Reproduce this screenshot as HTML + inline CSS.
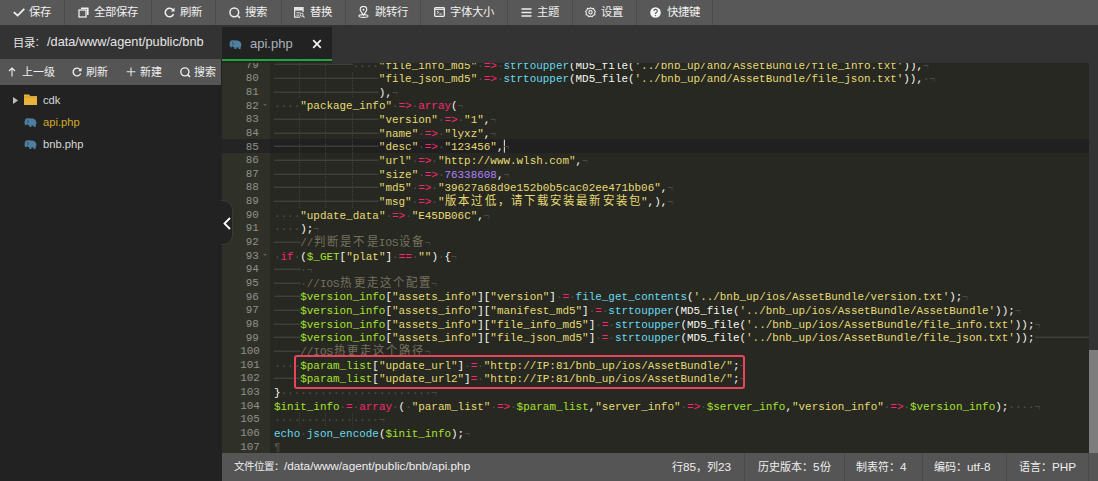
<!DOCTYPE html>
<html lang="zh-CN"><head><meta charset="utf-8">
<style>
*{margin:0;padding:0;box-sizing:border-box}
html,body{width:1098px;height:481px;overflow:hidden;background:#222;font-family:"Liberation Sans",sans-serif;}
.abs{position:absolute}
#tb{left:0;top:0;width:1098px;height:25px;background:#585858;}
.btn{position:absolute;top:0;height:25px;border-right:1px solid #4c4c4c;color:#f0f0f0;font-size:11.4px;}
.btn span{position:absolute;top:3px;white-space:nowrap;margin-left:1px}
.btn svg{position:absolute;top:6px}
#hdr{left:0;top:25px;width:222px;height:34px;background:#333;color:#e6e6e6;font-size:12.6px;}
#hdr span{position:absolute;left:13px;top:9px;white-space:nowrap}
#stb{left:0;top:59px;width:221px;height:26px;background:#555;color:#eee;font-size:11px;}
#stb span{position:absolute;top:3.8px;white-space:nowrap;margin-left:0.5px}
#stb svg{position:absolute}
#tree{left:0;top:85px;width:221px;height:396px;background:#222;}
.ti{position:absolute;left:43px;font-size:11.2px;color:#d8d8d8;white-space:nowrap}
#tabbar{left:222px;top:25px;width:876px;height:38px;background:#333;}
#tab{left:222px;top:27px;width:110px;height:34px;background:#222;border-bottom:2px solid #20a53a;}
#ed{left:222px;top:63px;width:876px;height:390px;background:#272822;overflow:hidden}
#gut{left:0;top:0;width:48px;height:390px;background:#2f3129;}
.gl{position:absolute;left:0;width:48px;height:13.64px;line-height:13.64px;font-family:"Liberation Mono",monospace;font-size:11.5px;color:#8f908a;}
.gl span{position:absolute;right:10.6px;top:0.2px;font-size:11.6px;transform:scaleX(0.94167);transform-origin:100% 0}
.gl.act{background:#242424}
.fold{position:absolute;right:3px;top:5.3px;width:0;height:0;border-left:2.3px solid transparent;border-right:2.3px solid transparent;border-top:2.8px solid #5e5e58}
#code{left:52px;top:0;width:816px;height:392px;}
.cl{position:absolute;left:0;height:13.64px;line-height:13.64px;white-space:pre;font-family:"Liberation Mono",monospace;font-size:11.5px;color:#f8f8f2;transform:scaleX(0.94986) translateY(0.7px);transform-origin:0 0}
.ig{position:absolute;width:1px;height:13.64px;background:repeating-linear-gradient(rgba(40,40,33,.3) 0 1px,#3f403a 1px 2px)}
#actl{left:48px;width:819px;height:13.64px;background:#202020}
.s{color:#e6db74}.k{color:#f92672}.v{color:#a6e22e}.f{color:#66d9ef}.n{color:#ae81ff}.c{color:#75715e}.t{color:#f8f8f2}.i{color:#52524d}
.eol{color:#4a4a45;font-size:10px}
b.w{display:inline-block;width:13.800px;text-align:center;font-weight:normal;font-family:"Liberation Sans",sans-serif;font-size:12px;line-height:13px;vertical-align:top}
b.tb{display:inline-block;height:13.64px;vertical-align:top;background:linear-gradient(#4a4a44,#4a4a44) 0 5.9px/100% 1px no-repeat}
b.cur{display:inline-block;width:1px;height:13px;background:#f8f8f0;vertical-align:top;margin-right:-1px}
#sb{left:867px;top:0;width:9px;height:390px;background:#333}
#thumb{left:867px;top:287px;width:9px;height:103px;background:#7d7d7d}
#st{left:222px;top:453px;width:876px;height:28px;background:#555;color:#eee;font-size:12px}
#st span{position:absolute;top:4.5px;white-space:nowrap;font-size:11.75px}
.z{font-style:normal;font-size:11px}
.sep{position:absolute;top:0;width:1px;height:28px;background:#4a4a4a}
#handle{left:221px;top:200px;width:12px;height:45px;background:#222;border:1px solid #3a3a3a;border-left:none;border-radius:0 10px 10px 0}
#redbox{left:294px;top:355px;width:451px;height:34px;border:2px solid #e8455c;border-radius:3px}
</style></head><body>
<div id="tb" class="abs">
 <div class="btn" style="left:0;width:65px"><svg style="left:13px;top:8px" width="12" height="9" viewBox="0 0 12 9"><path d="M0.8 4.2 L4.6 7.6 L11.3 0.8" fill="none" stroke="#f2f2f2" stroke-width="1.8"/></svg><span style="left:28px">保存</span></div>
 <div class="btn" style="left:65px;width:87px"><svg style="left:13px;top:7px" width="11" height="11" viewBox="0 0 11 11"><rect x="1" y="3" width="7" height="7" fill="none" stroke="#eee" stroke-width="1.3"/><path d="M3 1.2 H9.8 V8" fill="none" stroke="#eee" stroke-width="1.6"/></svg><span style="left:28px">全部保存</span></div>
 <div class="btn" style="left:151px;width:65px"><svg style="left:13px;top:7px" width="11" height="11" viewBox="0 0 11 11"><path d="M9.2 3.2 A4.3 4.3 0 1 0 9.6 7" fill="none" stroke="#eee" stroke-width="1.5"/><path d="M10.5 0.8 L10.5 4.6 L6.8 4.6 Z" fill="#eee"/></svg><span style="left:28px">刷新</span></div>
 <div class="btn" style="left:216px;width:66px"><svg style="left:13px;top:7px" width="12" height="12" viewBox="0 0 12 12"><circle cx="5.3" cy="5.3" r="4.4" fill="none" stroke="#eee" stroke-width="1.5"/><path d="M8.3 8.3 L11 11" stroke="#eee" stroke-width="1.6"/></svg><span style="left:28px">搜索</span></div>
 <div class="btn" style="left:281px;width:65px"><svg style="left:13px;top:7px" width="11" height="11" viewBox="0 0 11 11"><path d="M9.1 5.2 V0.6 H0.6 V10.2 H6.2" fill="none" stroke="#e4e4e4" stroke-width="1.2"/><path d="M0.6 2.3 H9.1" stroke="#e4e4e4" stroke-width="2.6"/><path d="M2.4 5.8 H6.4 M2.4 8.1 H5.2" stroke="#e4e4e4" stroke-width="1"/><circle cx="7.7" cy="7.7" r="1.5" fill="none" stroke="#e4e4e4" stroke-width="1"/><path d="M8.8 8.8 L10.5 10.5" stroke="#e4e4e4" stroke-width="1.1"/></svg><span style="left:28px">替换</span></div>
 <div class="btn" style="left:345px;width:76px"><svg style="left:13px;top:6px" width="11" height="12" viewBox="0 0 11 12"><path d="M5.5 9 C3 6 2.2 4.8 2.2 3.6 A3.3 3.3 0 0 1 8.8 3.6 C8.8 4.8 8 6 5.5 9 Z" fill="none" stroke="#eee" stroke-width="1.2"/><circle cx="5.5" cy="3.7" r="1" fill="#eee"/><ellipse cx="5.5" cy="10" rx="4.6" ry="1.4" fill="none" stroke="#eee" stroke-width="1.1"/></svg><span style="left:29px">跳转行</span></div>
 <div class="btn" style="left:421px;width:87px"><svg style="left:13px;top:7px" width="11" height="10" viewBox="0 0 11 10"><rect x="0.7" y="0.7" width="9.6" height="8.6" rx="0.8" fill="none" stroke="#eee" stroke-width="1.3"/><path d="M0.7 2.3 H10.3" stroke="#eee" stroke-width="1.2"/><path d="M3 4 L4.7 5.3 L3 6.6 M5.3 7 H7.8" fill="none" stroke="#eee" stroke-width="0.9"/></svg><span style="left:28px">字体大小</span></div>
 <div class="btn" style="left:508px;width:65px"><svg style="left:13px;top:8px" width="11" height="9" viewBox="0 0 11 9"><path d="M0.5 1 H10.5 M0.5 4.5 H10.5 M0.5 8 H10.5" stroke="#eee" stroke-width="1.5"/></svg><span style="left:28px">主题</span></div>
 <div class="btn" style="left:572px;width:65px"><svg style="left:13px;top:7px" width="11" height="11" viewBox="0 0 11 11"><path d="M5.5 0.6 L6.8 1.8 L8.6 1.4 L9.1 3.2 L10.4 4.4 L9.6 6 L10 7.8 L8.2 8.3 L7.1 9.8 L5.5 9 L3.9 9.8 L2.8 8.3 L1 7.8 L1.4 6 L0.6 4.4 L1.9 3.2 L2.4 1.4 L4.2 1.8 Z" fill="none" stroke="#eee" stroke-width="1.1" stroke-linejoin="round"/><circle cx="5.5" cy="5.3" r="1.7" fill="none" stroke="#eee" stroke-width="1.1"/></svg><span style="left:28px">设置</span></div>
 <div class="btn" style="left:636px;width:77px"><svg style="left:14px;top:7px" width="11" height="11" viewBox="0 0 11 11"><circle cx="5.5" cy="5.5" r="5.3" fill="#f4f4f4"/><path d="M3.9 4.1 A1.7 1.7 0 1 1 6.3 5.6 C5.6 6 5.5 6.3 5.5 7.1" fill="none" stroke="#585858" stroke-width="1.1"/><circle cx="5.5" cy="8.6" r="0.7" fill="#585858"/></svg><span style="left:30px">快捷键</span></div>
</div>
<div id="hdr" class="abs"><span style="font-size:11.3px;top:9px">目录</span><span style="left:35.5px;top:8.5px;font-size:12.76px">:</span><span style="left:47px;font-size:12.76px;top:8.5px">/data/www/agent/public/bnb</span></div>
<div id="stb" class="abs">
 <svg style="left:8px;top:8px" width="8" height="10" viewBox="0 0 8 10"><path d="M4 1 V9.5 M1 4 L4 1 L7 4" fill="none" stroke="#eee" stroke-width="1.1"/></svg><span style="left:21px">上一级</span>
 <svg style="left:72px;top:8px" width="10" height="10" viewBox="0 0 11 11"><path d="M9.2 3.2 A4.3 4.3 0 1 0 9.6 7" fill="none" stroke="#eee" stroke-width="1.5"/><path d="M10.5 0.8 L10.5 4.6 L6.8 4.6 Z" fill="#eee"/></svg><span style="left:85px">刷新</span>
 <svg style="left:126px;top:7.5px" width="10" height="10" viewBox="0 0 10 10"><path d="M5 0.5 V9.2 M0.6 4.8 H9.4" stroke="#e8e8e8" stroke-width="1.05"/></svg><span style="left:139px">新建</span>
 <svg style="left:180px;top:8px" width="11" height="11" viewBox="0 0 12 12"><circle cx="5.3" cy="5.3" r="4.4" fill="none" stroke="#eee" stroke-width="1.5"/><path d="M8.3 8.3 L11 11" stroke="#eee" stroke-width="1.6"/></svg><span style="left:193px">搜索</span>
</div>
<div id="tree" class="abs">
 <svg class="abs" style="left:13px;top:12px" width="5" height="7" viewBox="0 0 5 7"><path d="M0 0 L5 3.5 L0 7 Z" fill="#bdbdbd"/></svg>
 <svg class="abs" style="left:24px;top:9px" width="13" height="11" viewBox="0 0 13 11"><path d="M0 0.5 H5 L6.3 2 H13 V11 H0 Z" fill="#e8b33c"/><path d="M0 3 H13" stroke="#c99420" stroke-width="0.8"/></svg>
 <span class="ti" style="top:9px">cdk</span>
 <svg class="abs" style="left:24px;top:33px" width="13" height="9" viewBox="0 0 13 9"><path d="M2.2 0.6 C4 -0.2 6.6 0.2 8.4 0.6 C10.6 1 12.2 2.2 12.4 4.5 C12.5 5.8 12 6.6 11.6 7.2 L11.6 9 L9.6 9 L9.6 7.6 L7.4 7.6 L7.4 9 L5.4 9 L5.4 7.4 C4.4 7.2 3.4 6.6 3 5.8 L2.6 7.2 L1.8 7.4 C1.2 6.8 0.4 6 0.6 4.2 C0.8 2.6 1 1.2 2.2 0.6 Z" fill="#4f7fa0"/><path d="M3.4 1.6 C4.2 2.6 4.4 4 3.8 5" fill="none" stroke="#222" stroke-width="0.6"/></svg>
 <span class="ti" style="top:31px;color:#d4a92a">api.php</span>
 <svg class="abs" style="left:24px;top:55px" width="13" height="9" viewBox="0 0 13 9"><path d="M2.2 0.6 C4 -0.2 6.6 0.2 8.4 0.6 C10.6 1 12.2 2.2 12.4 4.5 C12.5 5.8 12 6.6 11.6 7.2 L11.6 9 L9.6 9 L9.6 7.6 L7.4 7.6 L7.4 9 L5.4 9 L5.4 7.4 C4.4 7.2 3.4 6.6 3 5.8 L2.6 7.2 L1.8 7.4 C1.2 6.8 0.4 6 0.6 4.2 C0.8 2.6 1 1.2 2.2 0.6 Z" fill="#4f7fa0"/><path d="M3.4 1.6 C4.2 2.6 4.4 4 3.8 5" fill="none" stroke="#222" stroke-width="0.6"/></svg>
 <span class="ti" style="top:53px">bnb.php</span>
</div>
<div id="tabbar" class="abs"></div><div class="abs" style="left:222px;top:61px;width:110px;height:2px;background:#262624"></div>
<div id="tab" class="abs"><svg class="abs" style="left:7px;top:13px" width="13" height="9" viewBox="0 0 13 9"><path d="M2.2 0.6 C4 -0.2 6.6 0.2 8.4 0.6 C10.6 1 12.2 2.2 12.4 4.5 C12.5 5.8 12 6.6 11.6 7.2 L11.6 9 L9.6 9 L9.6 7.6 L7.4 7.6 L7.4 9 L5.4 9 L5.4 7.4 C4.4 7.2 3.4 6.6 3 5.8 L2.6 7.2 L1.8 7.4 C1.2 6.8 0.4 6 0.6 4.2 C0.8 2.6 1 1.2 2.2 0.6 Z" fill="#4f7fa0"/><path d="M3.4 1.6 C4.2 2.6 4.4 4 3.8 5" fill="none" stroke="#222" stroke-width="0.6"/></svg><span class="abs" style="left:28px;top:8.5px;font-size:13px;color:#a9b3bd">api.php</span><svg class="abs" style="left:90px;top:12px" width="10" height="10" viewBox="0 0 10 10"><path d="M1.2 1.2 L8.8 8.8 M8.8 1.2 L1.2 8.8" stroke="#f4f4f4" stroke-width="1.7"/></svg></div>
<div id="ed" class="abs">
 <div id="gut" class="abs"><div class="gl" style="top:-5.46px"><span>79</span></div>
<div class="gl" style="top:8.18px"><span>80</span></div>
<div class="gl" style="top:21.82px"><span>81</span></div>
<div class="gl" style="top:35.46px"><span>82</span><i class="fold"></i></div>
<div class="gl" style="top:49.10px"><span>83</span></div>
<div class="gl" style="top:62.74px"><span>84</span></div>
<div class="gl act" style="top:76.38px"><span>85</span></div>
<div class="gl" style="top:90.02px"><span>86</span></div>
<div class="gl" style="top:103.66px"><span>87</span></div>
<div class="gl" style="top:117.30px"><span>88</span></div>
<div class="gl" style="top:130.94px"><span>89</span></div>
<div class="gl" style="top:144.58px"><span>90</span></div>
<div class="gl" style="top:158.22px"><span>91</span></div>
<div class="gl" style="top:171.86px"><span>92</span></div>
<div class="gl" style="top:185.50px"><span>93</span><i class="fold"></i></div>
<div class="gl" style="top:199.14px"><span>94</span></div>
<div class="gl" style="top:212.78px"><span>95</span></div>
<div class="gl" style="top:226.42px"><span>96</span></div>
<div class="gl" style="top:240.06px"><span>97</span></div>
<div class="gl" style="top:253.70px"><span>98</span></div>
<div class="gl" style="top:267.34px"><span>99</span></div>
<div class="gl" style="top:280.98px"><span>100</span></div>
<div class="gl" style="top:294.62px"><span>101</span></div>
<div class="gl" style="top:308.26px"><span>102</span></div>
<div class="gl" style="top:321.90px"><span>103</span></div>
<div class="gl" style="top:335.54px"><span>104</span></div>
<div class="gl" style="top:349.18px"><span>105</span></div>
<div class="gl" style="top:362.82px"><span>106</span></div>
<div class="gl" style="top:376.46px"><span>107</span></div></div>
 <div id="actl" class="abs" style="top:76.38px"></div>
 <div id="code" class="abs"><div class="ig" style="left:25.22px;top:-5.46px"></div>
<div class="ig" style="left:51.43px;top:-5.46px"></div>
<div class="ig" style="left:25.22px;top:8.18px"></div>
<div class="ig" style="left:51.43px;top:8.18px"></div>
<div class="ig" style="left:77.65px;top:8.18px"></div>
<div class="ig" style="left:25.22px;top:21.82px"></div>
<div class="ig" style="left:51.43px;top:21.82px"></div>
<div class="ig" style="left:77.65px;top:21.82px"></div>
<div class="ig" style="left:25.22px;top:49.10px"></div>
<div class="ig" style="left:51.43px;top:49.10px"></div>
<div class="ig" style="left:77.65px;top:49.10px"></div>
<div class="ig" style="left:25.22px;top:62.74px"></div>
<div class="ig" style="left:51.43px;top:62.74px"></div>
<div class="ig" style="left:77.65px;top:62.74px"></div>
<div class="ig" style="left:25.22px;top:76.38px"></div>
<div class="ig" style="left:51.43px;top:76.38px"></div>
<div class="ig" style="left:77.65px;top:76.38px"></div>
<div class="ig" style="left:25.22px;top:90.02px"></div>
<div class="ig" style="left:51.43px;top:90.02px"></div>
<div class="ig" style="left:77.65px;top:90.02px"></div>
<div class="ig" style="left:25.22px;top:103.66px"></div>
<div class="ig" style="left:51.43px;top:103.66px"></div>
<div class="ig" style="left:77.65px;top:103.66px"></div>
<div class="ig" style="left:25.22px;top:117.30px"></div>
<div class="ig" style="left:51.43px;top:117.30px"></div>
<div class="ig" style="left:77.65px;top:117.30px"></div>
<div class="ig" style="left:25.22px;top:130.94px"></div>
<div class="ig" style="left:51.43px;top:130.94px"></div>
<div class="ig" style="left:77.65px;top:130.94px"></div>
<div class="ig" style="left:25.22px;top:349.18px"></div>
<div class="ig" style="left:51.43px;top:349.18px"></div>
<div class="ig" style="left:77.65px;top:349.18px"></div>
<div class="cl" style="top:-5.46px"><b class="tb" style="width:82.800px"></b><span class="i">····</span><span class="s">&quot;file_info_md5&quot;</span><span class="i">·</span><span class="k">=&gt;</span><span class="i">·</span><span class="f">strtoupper</span><span class="t">(MD5_file(</span><span class="s">&#x27;../bnb_up/and/AssetBundle/file_info.txt&#x27;</span><span class="t">))</span><span class="t">,</span><span class="i eol">¬</span></div>
<div class="cl" style="top:8.18px"><b class="tb" style="width:110.400px"></b><span class="s">&quot;file_json_md5&quot;</span><span class="i">·</span><span class="k">=&gt;</span><span class="i">·</span><span class="f">strtoupper</span><span class="t">(MD5_file(</span><span class="s">&#x27;../bnb_up/and/AssetBundle/file_json.txt&#x27;</span><span class="t">))</span><span class="t">,</span><span class="i">·</span><span class="i eol">¬</span></div>
<div class="cl" style="top:21.82px"><b class="tb" style="width:110.400px"></b><span class="t">),</span><span class="i eol">¬</span></div>
<div class="cl" style="top:35.46px"><span class="i">····</span><span class="s">&quot;package_info&quot;</span><span class="i">·</span><span class="k">=&gt;</span><span class="i">·</span><span class="k">array</span><span class="t">(</span><span class="i eol">¬</span></div>
<div class="cl" style="top:49.10px"><b class="tb" style="width:110.400px"></b><span class="s">&quot;version&quot;</span><span class="i">·</span><span class="k">=&gt;</span><span class="i">·</span><span class="s">&quot;1&quot;</span><span class="t">,</span><span class="i eol">¬</span></div>
<div class="cl" style="top:62.74px"><b class="tb" style="width:110.400px"></b><span class="s">&quot;name&quot;</span><span class="i">·</span><span class="k">=&gt;</span><span class="i">·</span><span class="s">&quot;lyxz&quot;</span><span class="t">,</span><span class="i eol">¬</span></div>
<div class="cl" style="top:76.38px"><b class="tb" style="width:110.400px"></b><span class="s">&quot;desc&quot;</span><span class="i">·</span><span class="k">=&gt;</span><span class="i">·</span><span class="s">&quot;123456&quot;</span><span class="t">,</span><b class="cur"></b><span class="i eol">¬</span></div>
<div class="cl" style="top:90.02px"><b class="tb" style="width:110.400px"></b><span class="s">&quot;url&quot;</span><span class="i">·</span><span class="k">=&gt;</span><span class="i">·</span><span class="s">&quot;http://www.wlsh.com&quot;</span><span class="t">,</span><span class="i eol">¬</span></div>
<div class="cl" style="top:103.66px"><b class="tb" style="width:110.400px"></b><span class="s">&quot;size&quot;</span><span class="i">·</span><span class="k">=&gt;</span><span class="i">·</span><span class="n">76338608</span><span class="t">,</span><span class="i eol">¬</span></div>
<div class="cl" style="top:117.30px"><b class="tb" style="width:110.400px"></b><span class="s">&quot;md5&quot;</span><span class="i">·</span><span class="k">=&gt;</span><span class="i">·</span><span class="s">&quot;39627a68d9e152b0b5cac02ee471bb06&quot;</span><span class="t">,</span><span class="i eol">¬</span></div>
<div class="cl" style="top:130.94px"><b class="tb" style="width:110.400px"></b><span class="s">&quot;msg&quot;</span><span class="i">·</span><span class="k">=&gt;</span><span class="i">·</span><span class="s">&quot;<b class="w">版</b><b class="w">本</b><b class="w">过</b><b class="w">低</b><b class="w">，</b><b class="w">请</b><b class="w">下</b><b class="w">载</b><b class="w">安</b><b class="w">装</b><b class="w">最</b><b class="w">新</b><b class="w">安</b><b class="w">装</b><b class="w">包</b>&quot;</span><span class="t">,),</span><span class="i eol">¬</span></div>
<div class="cl" style="top:144.58px"><span class="i">····</span><span class="s">&quot;update_data&quot;</span><span class="i">·</span><span class="k">=&gt;</span><span class="i">·</span><span class="s">&quot;E45DB06C&quot;</span><span class="t">,</span><span class="i eol">¬</span></div>
<div class="cl" style="top:158.22px"><span class="i">····</span><span class="t">);</span><span class="i eol">¬</span></div>
<div class="cl" style="top:171.86px"><b class="tb" style="width:27.600px"></b><span class="c">//<b class="w">判</b><b class="w">断</b><b class="w">是</b><b class="w">不</b><b class="w">是</b>IOS<b class="w">设</b><b class="w">备</b></span><span class="i eol">¬</span></div>
<div class="cl" style="top:185.50px"><span class="i">·</span><span class="k">if</span><span class="i">·</span><span class="t">(</span><span class="v">$_GET</span><span class="t">[</span><span class="s">&quot;plat&quot;</span><span class="t">]</span><span class="i">·</span><span class="k">==</span><span class="i">·</span><span class="s">&quot;&quot;</span><span class="t">)</span><span class="i">·</span><span class="t">{</span><span class="i eol">¬</span></div>
<div class="cl" style="top:199.14px"><b class="tb" style="width:27.600px"></b><span class="i">·</span><span class="i eol">¬</span></div>
<div class="cl" style="top:212.78px"><b class="tb" style="width:27.600px"></b><span class="i">·</span><span class="c">//IOS<b class="w">热</b><b class="w">更</b><b class="w">走</b><b class="w">这</b><b class="w">个</b><b class="w">配</b><b class="w">置</b></span><span class="i eol">¬</span></div>
<div class="cl" style="top:226.42px"><b class="tb" style="width:27.600px"></b><span class="v">$version_info</span><span class="t">[</span><span class="s">&quot;assets_info&quot;</span><span class="t">][</span><span class="s">&quot;version&quot;</span><span class="t">]</span><span class="i">·</span><span class="k">=</span><span class="i">·</span><span class="f">file_get_contents</span><span class="t">(</span><span class="s">&#x27;../bnb_up/ios/AssetBundle/version.txt&#x27;</span><span class="t">);</span><span class="i eol">¬</span></div>
<div class="cl" style="top:240.06px"><b class="tb" style="width:27.600px"></b><span class="v">$version_info</span><span class="t">[</span><span class="s">&quot;assets_info&quot;</span><span class="t">][</span><span class="s">&quot;manifest_md5&quot;</span><span class="t">]</span><span class="i">·</span><span class="k">=</span><span class="i">·</span><span class="f">strtoupper</span><span class="t">(MD5_file(</span><span class="s">&#x27;../bnb_up/ios/AssetBundle/AssetBundle&#x27;</span><span class="t">));</span><span class="i eol">¬</span></div>
<div class="cl" style="top:253.70px"><b class="tb" style="width:27.600px"></b><span class="v">$version_info</span><span class="t">[</span><span class="s">&quot;assets_info&quot;</span><span class="t">][</span><span class="s">&quot;file_info_md5&quot;</span><span class="t">]</span><span class="i">·</span><span class="k">=</span><span class="i">·</span><span class="f">strtoupper</span><span class="t">(MD5_file(</span><span class="s">&#x27;../bnb_up/ios/AssetBundle/file_info.txt&#x27;</span><span class="t">));</span><span class="i eol">¬</span></div>
<div class="cl" style="top:267.34px"><b class="tb" style="width:27.600px"></b><span class="v">$version_info</span><span class="t">[</span><span class="s">&quot;assets_info&quot;</span><span class="t">][</span><span class="s">&quot;file_json_md5&quot;</span><span class="t">]</span><span class="i">·</span><span class="k">=</span><span class="i">·</span><span class="f">strtoupper</span><span class="t">(MD5_file(</span><span class="s">&#x27;../bnb_up/ios/AssetBundle/file_json.txt&#x27;</span><span class="t">));</span><b class="tb" style="width:165.600px"></b></div>
<div class="cl" style="top:280.98px"><b class="tb" style="width:27.600px"></b><span class="c">//IOS<b class="w">热</b><b class="w">更</b><b class="w">走</b><b class="w">这</b><b class="w">个</b><b class="w">路</b><b class="w">径</b></span><span class="i eol">¬</span></div>
<div class="cl" style="top:294.62px"><span class="i">····</span><span class="v">$param_list</span><span class="t">[</span><span class="s">&quot;update_url&quot;</span><span class="t">]</span><span class="i">·</span><span class="k">=</span><span class="i">·</span><span class="s">&quot;http://IP:81/bnb_up/ios/AssetBundle/&quot;</span><span class="t">;</span><span class="i eol">¬</span></div>
<div class="cl" style="top:308.26px"><b class="tb" style="width:27.600px"></b><span class="v">$param_list</span><span class="t">[</span><span class="s">&quot;update_url2&quot;</span><span class="t">]</span><span class="k">=</span><span class="i">·</span><span class="s">&quot;http://IP:81/bnb_up/ios/AssetBundle/&quot;</span><span class="t">;</span><span class="i eol">¬</span></div>
<div class="cl" style="top:321.90px"><span class="t">}</span><span class="i">·······················</span><span class="i eol">¬</span></div>
<div class="cl" style="top:335.54px"><span class="v">$init_info</span><span class="i">·</span><span class="k">=</span><span class="i">·</span><span class="k">array</span><span class="i">·</span><span class="t">(</span><span class="i">·</span><span class="s">&quot;param_list&quot;</span><span class="i">·</span><span class="k">=&gt;</span><span class="i">·</span><span class="v">$param_list</span><span class="t">,</span><span class="s">&quot;server_info&quot;</span><span class="i">·</span><span class="k">=&gt;</span><span class="i">·</span><span class="v">$server_info</span><span class="t">,</span><span class="s">&quot;version_info&quot;</span><span class="i">·</span><span class="k">=&gt;</span><span class="i">·</span><span class="v">$version_info</span><span class="t">);</span><span class="i">····</span><span class="i eol">¬</span></div>
<div class="cl" style="top:349.18px"><span class="i">················</span><span class="i eol">¬</span></div>
<div class="cl" style="top:362.82px"><span class="f">echo</span><span class="i">·</span><span class="f">json_encode</span><span class="t">(</span><span class="v">$init_info</span><span class="t">);</span><span class="i eol">¬</span></div>
<div class="cl" style="top:376.46px"><span class="i">¶</span></div></div>
 <div id="sb" class="abs"></div><div id="thumb" class="abs"></div>
</div>
<div id="redbox" class="abs"></div>
<div id="handle" class="abs"><svg class="abs" style="left:2px;top:16px" width="8" height="13" viewBox="0 0 8 13"><path d="M7 1 L1.5 6.5 L7 12" fill="none" stroke="#fff" stroke-width="1.8"/></svg></div>
<div id="st" class="abs">
 <span style="left:12px"><i class="z" style="font-size:10.5px">文件位置：</i>/data/www/agent/public/bnb/api.php</span>
 <span style="left:450px"><i class="z">行</i>85<i class="z">，列</i>23</span><div class="sep" style="left:522px"></div>
 <span style="left:536px"><i class="z">历史版本：</i>5<i class="z">份</i></span><div class="sep" style="left:622px"></div>
 <span style="left:634px"><i class="z">制表符：</i>4</span><div class="sep" style="left:700px"></div>
 <span style="left:712px"><i class="z">编码：</i>utf-8</span><div class="sep" style="left:784px"></div>
 <span style="left:797px"><i class="z">语言：</i>PHP</span><div class="sep" style="left:866px"></div>
</div>
</body></html>
